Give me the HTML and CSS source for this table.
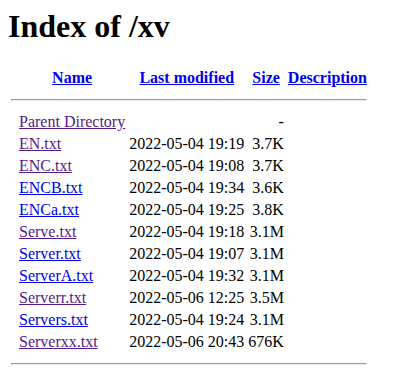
FILE: index.html
```html
<!DOCTYPE html>
<html>
<head>
<meta charset="utf-8">
<title>Index of /xv</title>
<link rel="stylesheet" href="styles.css">
</head>
<body class="page">
<h1 class="title">Index of /xv</h1>
<table class="listing">
<tr><th class="ico"></th><th><a class="lnk" href="#">Name</a></th><th><a class="lnk" href="#">Last modified</a></th><th><a class="lnk" href="#">Size</a></th><th><a class="lnk" href="#">Description</a></th></tr>
<tr><th colspan="5"><hr class="rule"></th></tr>
<tr><td class="ico"></td><td><a class="lnk visited" href="#">Parent Directory</a></td><td>&nbsp;</td><td class="r">- </td><td>&nbsp;</td></tr>
<tr><td class="ico"></td><td><a class="lnk visited" href="#">EN.txt</a></td><td class="r">2022-05-04 19:19</td><td class="r">3.7K</td><td>&nbsp;</td></tr>
<tr><td class="ico"></td><td><a class="lnk visited" href="#">ENC.txt</a></td><td class="r">2022-05-04 19:08</td><td class="r">3.7K</td><td>&nbsp;</td></tr>
<tr><td class="ico"></td><td><a class="lnk" href="#">ENCB.txt</a></td><td class="r">2022-05-04 19:34</td><td class="r">3.6K</td><td>&nbsp;</td></tr>
<tr><td class="ico"></td><td><a class="lnk" href="#">ENCa.txt</a></td><td class="r">2022-05-04 19:25</td><td class="r">3.8K</td><td>&nbsp;</td></tr>
<tr><td class="ico"></td><td><a class="lnk visited" href="#">Serve.txt</a></td><td class="r">2022-05-04 19:18</td><td class="r">3.1M</td><td>&nbsp;</td></tr>
<tr><td class="ico"></td><td><a class="lnk" href="#">Server.txt</a></td><td class="r">2022-05-04 19:07</td><td class="r">3.1M</td><td>&nbsp;</td></tr>
<tr><td class="ico"></td><td><a class="lnk" href="#">ServerA.txt</a></td><td class="r">2022-05-04 19:32</td><td class="r">3.1M</td><td>&nbsp;</td></tr>
<tr><td class="ico"></td><td><a class="lnk visited" href="#">Serverr.txt</a></td><td class="r">2022-05-06 12:25</td><td class="r">3.5M</td><td>&nbsp;</td></tr>
<tr><td class="ico"></td><td><a class="lnk" href="#">Servers.txt</a></td><td class="r">2022-05-04 19:24</td><td class="r">3.1M</td><td>&nbsp;</td></tr>
<tr><td class="ico"></td><td><a class="lnk visited" href="#">Serverxx.txt</a></td><td class="r">2022-05-06 20:43</td><td class="r">676K</td><td>&nbsp;</td></tr>
<tr><th colspan="5"><hr class="rule"></th></tr>
</table>
</body>
</html>
```
FILE: styles.css
```css
.page {
  margin: 8px;
  font-family: "Liberation Serif", "Times New Roman", serif;
  font-size: 16px;
  color: #000;
  background: #fff;
}
.title {
  font-size: 32px;
  font-weight: bold;
  margin: 0 0 21px 0;
}
.listing {
  border-spacing: 2px;
}
.listing th, .listing td {
  padding: 1px;
}
.ico {
  width: 4px;
}
.r {
  text-align: right;
}
.lnk {
  color: #0000ee;
  text-decoration: underline;
}
.lnk.visited {
  color: #551a8b;
}
.rule {
  margin: 8px 0;
}
```
